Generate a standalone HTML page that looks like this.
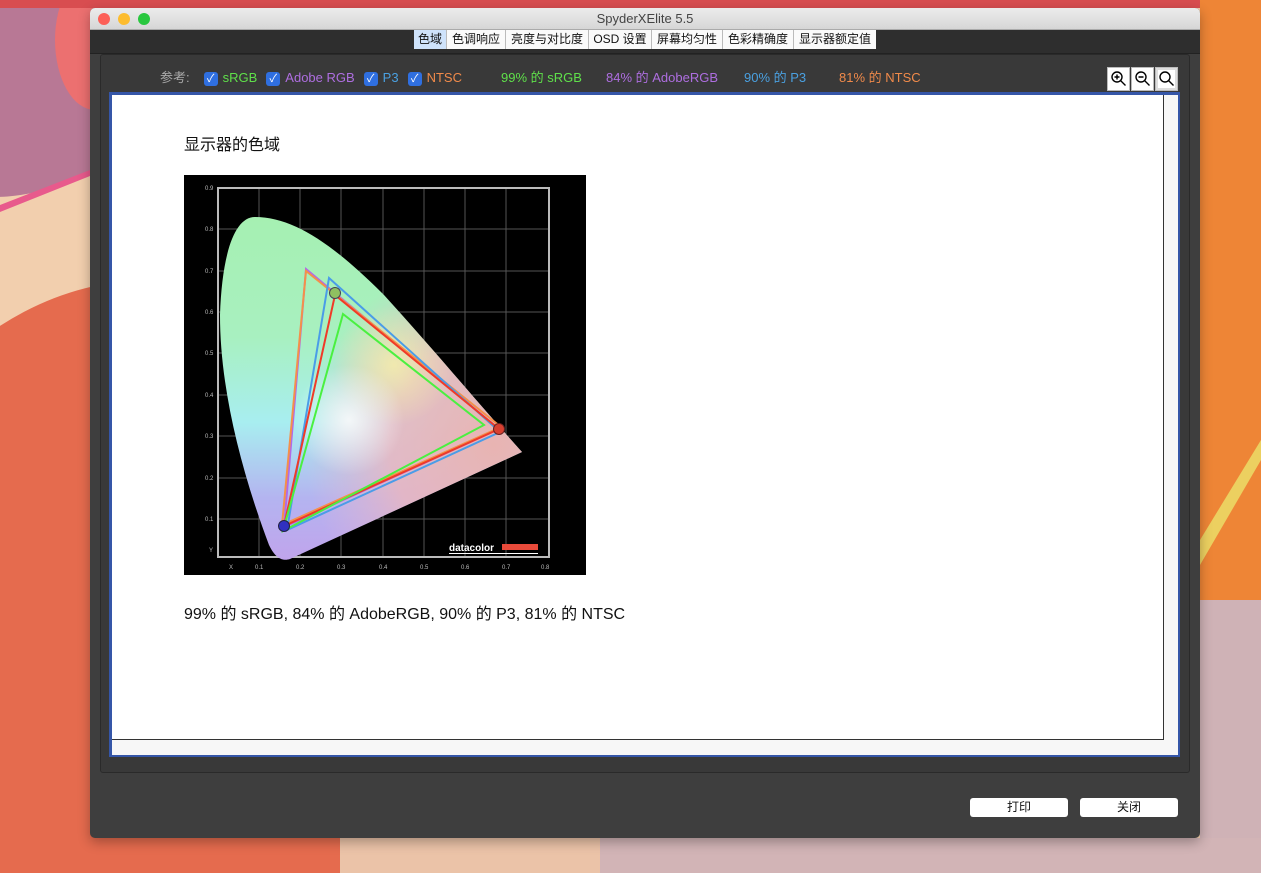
<!DOCTYPE html>
<html style="overflow:hidden"><head><meta charset="utf-8"><style>
*{margin:0;padding:0;box-sizing:border-box}
html,body{width:1261px;height:873px;overflow:hidden}
body{position:relative;background:#f2cfae;font-family:"Liberation Sans","Noto Sans CJK SC",sans-serif}
.abs{position:absolute}
.tab{position:absolute;top:30px;height:19px;font-size:12px;line-height:19px;color:#111;background:#fafafa;border-right:1px solid #bbb;text-align:center}
.cb{display:inline-block;width:14px;height:14px;background:#2f6fe0;border-radius:3px;color:#fff;font-size:11px;line-height:14px;text-align:center;vertical-align:0px;margin-right:5px}
.btn{position:absolute;top:798px;width:98px;height:19px;background:#fff;border-radius:3px;font-size:12px;line-height:19px;text-align:center;color:#111}
</style></head><body>
<svg class="abs" style="left:0;top:0" width="1261" height="873">
<rect width="1261" height="873" fill="#f2cfae"/>
<ellipse cx="30" cy="90" rx="150" ry="100" fill="#b87895" transform="rotate(-20 30 90)"/>
<path d="M0 205 L90 170 L90 176 L0 212Z" fill="#e85a8c"/>
<ellipse cx="95" cy="40" rx="40" ry="70" fill="#ec7070"/>
<ellipse cx="150" cy="700" rx="330" ry="420" fill="#e56b4e"/>
<rect x="0" y="0" width="1261" height="8" fill="#d84d50"/>
<rect x="1200" y="0" width="61" height="600" fill="#ee8536"/>
<path d="M1200 540 L1261 440 L1261 460 L1200 565Z" fill="#ecd060"/>
<rect x="1200" y="600" width="61" height="273" fill="#cfb2b6"/>
<rect x="600" y="838" width="661" height="35" fill="#d2b4b6"/>
<rect x="340" y="838" width="260" height="35" fill="#ebc3a8"/>
</svg>
<div class="abs" style="left:90px;top:8px;width:1110px;height:830px;background:#3e3e3e;border-radius:5px;box-shadow:0 4px 12px rgba(0,0,0,.3);overflow:hidden">
 <div class="abs" style="left:0;top:0;width:1110px;height:22px;background:linear-gradient(#ececec,#d6d6d6);border-bottom:1px solid #aaa;text-align:center;font-size:13px;line-height:22px;color:#444">SpyderXElite 5.5</div>
 <div class="abs" style="left:8px;top:5px;width:12px;height:12px;border-radius:50%;background:#fc5f57"></div>
 <div class="abs" style="left:28px;top:5px;width:12px;height:12px;border-radius:50%;background:#fdbc2e"></div>
 <div class="abs" style="left:48px;top:5px;width:12px;height:12px;border-radius:50%;background:#29c73f"></div>
 <div class="abs" style="left:0;top:22px;width:1110px;height:24px;background:#2e2e2e;border-bottom:1px solid #222"></div>
 <div class="abs" style="left:10px;top:46px;width:1090px;height:719px;background:#393939;border:1px solid #2a2a2a;border-radius:3px"></div>
</div>
<div class="tab" style="left:414px;width:33px;background:#cfe3fb">色域</div>
<div class="tab" style="left:447px;width:59px">色调响应</div>
<div class="tab" style="left:506px;width:83px">亮度与对比度</div>
<div class="tab" style="left:589px;width:63px">OSD 设置</div>
<div class="tab" style="left:652px;width:71px">屏幕均匀性</div>
<div class="tab" style="left:723px;width:71px">色彩精确度</div>
<div class="tab" style="left:794px;width:82px;border-right:none">显示器额定值</div>
<div class="abs" style="left:160px;top:70px;font-size:13px;line-height:16px;white-space:nowrap">
 <span style="color:#aaa;margin-right:14px">参考:</span><span class="cb">✓</span><span style="color:#5fe04a;margin-right:9px">sRGB</span><span class="cb">✓</span><span style="color:#ae6ee0;margin-right:9px">Adobe RGB</span><span class="cb">✓</span><span style="color:#4aa0e0;margin-right:9px">P3</span><span class="cb">✓</span><span style="color:#f08a4a">NTSC</span>
</div>
<div class="abs" style="left:501px;top:70px;font-size:13px;line-height:16px;color:#5fe04a;white-space:nowrap">99% 的 sRGB</div>
<div class="abs" style="left:606px;top:70px;font-size:13px;line-height:16px;color:#ae6ee0;white-space:nowrap">84% 的 AdobeRGB</div>
<div class="abs" style="left:744px;top:70px;font-size:13px;line-height:16px;color:#4aa0e0;white-space:nowrap">90% 的 P3</div>
<div class="abs" style="left:839px;top:70px;font-size:13px;line-height:16px;color:#f08a4a;white-space:nowrap">81% 的 NTSC</div>
<svg class="abs" style="left:1107px;top:67px" width="72" height="25">
 <rect x="0.5" y="0.5" width="22" height="23" fill="#fff" stroke="#bbb"/><rect x="24.5" y="0.5" width="22" height="23" fill="#fff" stroke="#bbb"/><rect x="48.5" y="0.5" width="22" height="23" fill="#ddd" stroke="#bbb"/><rect x="51" y="3" width="17" height="18" fill="#fff"/>
 <g fill="none" stroke="#000" stroke-width="1.4"><circle cx="10" cy="10" r="5"/><path d="M13.5 13.5l5 5M7.5 10h5M10 7.5v5"/><circle cx="34" cy="10" r="5"/><path d="M37.5 13.5l5 5M31.5 10h5"/><circle cx="58" cy="10" r="5"/><path d="M61.5 13.5l5 5"/></g>
</svg>
<div class="abs" style="left:109px;top:92px;width:1071px;height:665px;background:#f7f7f7;border:2px solid #3556a8;border-left-width:3px;border-top-width:3px"></div>
<div class="abs" style="left:112px;top:95px;width:1052px;height:645px;background:#fff;border-right:1px solid #333;border-bottom:1px solid #333"></div>
<div class="abs" style="left:184px;top:131px;font-size:16px;color:#111">显示器的色域</div>
<div class="abs" style="left:184px;top:600px;font-size:16px;color:#111;white-space:nowrap">99% 的 sRGB, 84% 的 AdobeRGB, 90% 的 P3, 81% 的 NTSC</div>
<svg class="abs" style="left:184px;top:175px" width="402" height="400">
 <defs>
  <linearGradient id="g1" x1="0" y1="0" x2="0" y2="1"><stop offset="0" stop-color="#a6f0b2"/><stop offset=".35" stop-color="#a8f0c0"/><stop offset=".6" stop-color="#a8eef0"/><stop offset=".82" stop-color="#b4b4f0"/><stop offset="1" stop-color="#c0a4ec"/></linearGradient>
  <radialGradient id="g2" cx="310" cy="270" r="190" gradientUnits="userSpaceOnUse"><stop offset="0" stop-color="#e8b4b2"/><stop offset=".55" stop-color="#eab6c0" stop-opacity=".85"/><stop offset="1" stop-color="#e8b6d0" stop-opacity="0"/></radialGradient>
  <radialGradient id="g3" cx="165" cy="245" r="55" gradientUnits="userSpaceOnUse"><stop offset="0" stop-color="#fff" stop-opacity=".8"/><stop offset="1" stop-color="#fff" stop-opacity="0"/></radialGradient>
  <radialGradient id="g4" cx="210" cy="190" r="60" gradientUnits="userSpaceOnUse"><stop offset="0" stop-color="#f8f0a8" stop-opacity=".8"/><stop offset="1" stop-color="#f8f0a8" stop-opacity="0"/></radialGradient>
 </defs>
 <rect width="402" height="400" fill="#000"/>
 <g stroke="#555" stroke-width="1"><path d="M75 13V382M116 13V382M157 13V382M199 13V382M240 13V382M281 13V382M322 13V382M34 344H365M34 303H365M34 261H365M34 220H365M34 178H365M34 137H365M34 96H365M34 54H365"/></g>
 <rect x="34" y="13" width="331" height="369" fill="none" stroke="#bbb" stroke-width="2"/>
 <path d="M71 42 C50 42 38 80 36 140 C36 210 55 290 85 370 C92 385 100 386 106 384 L338 277 C300 235 250 175 200 120 C150 70 110 42 71 42Z" fill="url(#g1)"/>
 <path d="M71 42 C50 42 38 80 36 140 C36 210 55 290 85 370 C92 385 100 386 106 384 L338 277 C300 235 250 175 200 120 C150 70 110 42 71 42Z" fill="url(#g2)"/>
 <path d="M71 42 C50 42 38 80 36 140 C36 210 55 290 85 370 C92 385 100 386 106 384 L338 277 C300 235 250 175 200 120 C150 70 110 42 71 42Z" fill="url(#g4)"/>
 <path d="M71 42 C50 42 38 80 36 140 C36 210 55 290 85 370 C92 385 100 386 106 384 L338 277 C300 235 250 175 200 120 C150 70 110 42 71 42Z" fill="url(#g3)"/>
 <g fill="none" stroke-width="2">
  <path d="M122 94L315 254L100 352Z" stroke="#b06ae8"/>
  <path d="M98 350L122 96L317 252Z" stroke="#f4904a"/>
  <path d="M145 103L316 257L103 355Z" stroke="#4a9ce8"/>
  <path d="M151 120L315 254L100 351Z" stroke="#f03a28"/>
  <path d="M159 139L300 250L99 356Z" stroke="#4af040"/>
 </g>
 <circle cx="151" cy="118" r="5.5" fill="#8fc060" stroke="#445" stroke-width="1"/>
 <circle cx="315" cy="254" r="5.5" fill="#d84030" stroke="#622" stroke-width="1"/>
 <circle cx="100" cy="351" r="5.5" fill="#3030c0" stroke="#224" stroke-width="1"/>
 <g fill="#bbb" font-size="6" font-family="Liberation Sans">
  <text x="21" y="15">0.9</text><text x="21" y="56">0.8</text><text x="21" y="98">0.7</text><text x="21" y="139">0.6</text><text x="21" y="180">0.5</text><text x="21" y="222">0.4</text><text x="21" y="263">0.3</text><text x="21" y="305">0.2</text><text x="21" y="346">0.1</text><text x="25" y="377">Y</text>
  <text x="45" y="394">X</text><text x="71" y="394">0.1</text><text x="112" y="394">0.2</text><text x="153" y="394">0.3</text><text x="195" y="394">0.4</text><text x="236" y="394">0.5</text><text x="277" y="394">0.6</text><text x="318" y="394">0.7</text><text x="357" y="394">0.8</text>
 </g>
 <text x="265" y="376" fill="#fff" font-size="10" font-weight="bold" font-family="Liberation Sans">datacolor</text>
 <rect x="318" y="369" width="36" height="6" fill="#e84a3a"/>
 <rect x="265" y="378" width="89" height="1" fill="#fff"/>
</svg>
<div class="btn" style="left:970px">打印</div>
<div class="btn" style="left:1080px">关闭</div>
</body></html>
